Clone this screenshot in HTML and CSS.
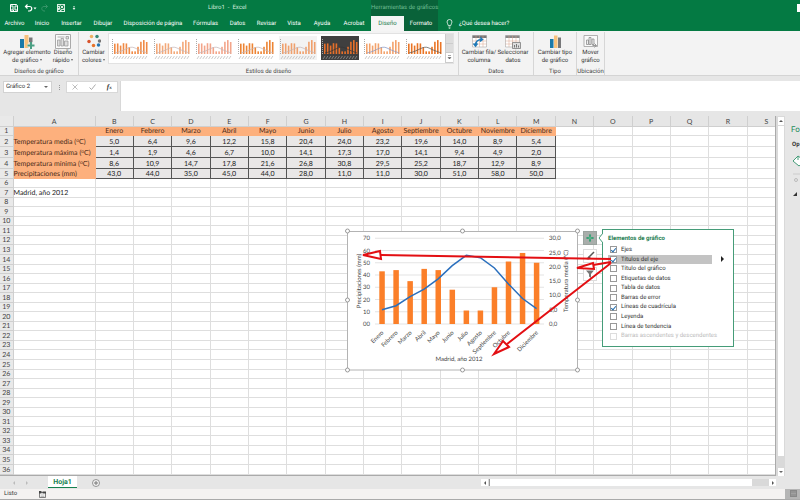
FILE: index.html
```html
<!DOCTYPE html>
<html lang="es">
<head>
<meta charset="utf-8">
<title>Libro1 - Excel</title>
<link rel="stylesheet" href="styles.css">
</head>
<body>
<header class="top">
  <div class="titlebar">
    <div class="quick">
      <button aria-label="Guardar"><svg width="8" height="8" viewBox="0 0 16 16"><path d="M1 1h12l2 2v12H1zM4 1v5h8V1M4 15v-5h8v5M7 12v3" fill="none" stroke="#fff" stroke-width="2"/></svg></button>
      <button aria-label="Deshacer"><svg width="13" height="8" viewBox="0 0 26 16"><path d="M3 5h8c6 0 6 8 0 9H8M7 1L3 5l4 4" fill="none" stroke="#fff" stroke-width="2.4"/><path d="M19 7h6l-3 4z" fill="#fff"/></svg></button>
      <button class="dim" aria-label="Rehacer"><svg width="8" height="8" viewBox="0 0 16 16"><path d="M13 5H6c-6 0-6 8 0 9h2M9 1l4 4-4 4" fill="none" stroke="#fff" stroke-width="2"/></svg></button>
      <button class="prev" aria-label="Vista previa"><svg width="8" height="8" viewBox="0 0 16 16"><path d="M0 0h16v16H0z" fill="#dcefe4"/><path d="M2 3h4M2 7h2M2 13h3" stroke="#087a43" stroke-width="1.500"/><circle cx="10" cy="6" r="3.500" fill="none" stroke="#087a43" stroke-width="2"/><path d="M8 9l-4 5M9 13h5" stroke="#087a43" stroke-width="2"/></svg></button>
      <button class="more" aria-label="Personalizar"><svg width="4" height="6" viewBox="0 0 8 12"><path d="M2 3h4M2 6h4l-2 3z" fill="#fff" stroke="#fff"/></svg></button>
    </div>
    <div class="doc">Libro1&nbsp; -&nbsp; Excel</div>
    <div class="tools">Herramientas de gráficos</div>
    <i class="winbtn"></i>
  </div>
  <nav class="tabs">
    <a href="#">Archivo</a><a href="#">Inicio</a><a href="#">Insertar</a><a href="#">Dibujar</a><a href="#">Disposición de página</a><a href="#">Fórmulas</a><a href="#">Datos</a><a href="#">Revisar</a><a href="#">Vista</a><a href="#">Ayuda</a><a href="#">Acrobat</a><a href="#" class="active">Diseño</a><a href="#" class="ctx">Formato</a>
    <a href="#" class="ask"><svg width="7" height="10" viewBox="0 0 14 20"><path d="M4.500 13C4.500 10 2 9 2 6a5 5 0 0 1 10 0c0 3-2.500 4-2.500 7zM5 16h4M5.500 18.500h3" fill="none" stroke="#fff" stroke-width="1.500"/></svg>¿Qué desea hacer?</a>
  </nav>
</header>

<section class="ribbon">
  <div class="group g-layout">
    <div class="tools-row">
      <button class="big wide"><svg width="16" height="15" viewBox="0 0 32 30"><path d="M2 10h8v18H2z" fill="#1b79a8"/><path d="M11 2h8v26h-8z" fill="#f8c27d"/><path d="M20 7h7v16h-7z" fill="#77787a"/><path d="M24 16v14M17 23h14" stroke="#f3f3f3" stroke-width="7"/><path d="M24 16v14M17 23h14" stroke="#4a9f83" stroke-width="4"/></svg><span>Agregar elemento<br>de gráfico <i class="car"></i></span></button>
      <button class="big"><svg width="16" height="15" viewBox="0 0 32 30"><path d="M1 1h30v28H1z" fill="#fafafa" stroke="#aaa" stroke-width="2"/><path d="M5 6h14M5 12h5v12H5zM12 9h5v15h-5zM19 14h7v10h-7zM22 5h5v5h-5z" fill="#ddd" stroke="#999" stroke-width="1.500"/></svg><span>Diseño<br>rápido <i class="car"></i></span></button>
    </div>
    <h2>Diseños de gráfico</h2>
  </div>
  <div class="group g-style">
    <div class="tools-row">
      <button class="big"><svg width="14" height="15" viewBox="0 0 28 30"><circle cx="9" cy="5" r="3.500" fill="#eeb064"/><circle cx="20" cy="5" r="3.500" fill="#39897a"/><circle cx="4" cy="15" r="3.500" fill="#d9532c"/><circle cx="25" cy="14" r="3.500" fill="#777"/><circle cx="13" cy="23" r="3.500" fill="#e8732a"/><circle cx="23" cy="22" r="3.500" fill="#2677b2"/></svg><span>Cambiar<br>colores <i class="car"></i></span></button>
      <div class="gallery" id="gallery">
        <div class="spin"><button aria-label="Arriba"></button><button aria-label="Abajo"></button><button aria-label="Más"><svg width="5" height="5" viewBox="0 0 10 10"><path d="M2 1h6M2 5h6L5 8z" fill="#555" stroke="#555"/></svg></button></div>
      </div>
    </div>
    <h2>Estilos de diseño</h2>
  </div>
  <div class="group g-data">
    <div class="tools-row">
      <button class="big"><svg width="15" height="15" viewBox="0 0 30 30"><path d="M1 3h28v23H1z" fill="#fff" stroke="#999"/><path d="M1 3h28v5H1z" fill="#777"/><path d="M8 3v23M15 3v23M22 3v23M1 14h28M1 20h28" stroke="#dba58c"/><path d="M7 23c0-8 5-12 13-12M16 7l5 4-5 4M3 19l4 5 4-5" fill="none" stroke="#1f7ab8" stroke-width="3"/></svg><span>Cambiar fila/<br>columna</span></button>
      <button class="big"><svg width="16" height="15" viewBox="0 0 32 30"><path d="M1 3h28v23H1z" fill="#fff" stroke="#999"/><path d="M1 3h28v5H1z" fill="#888"/><path d="M8 3v23M15 3v23M22 3v23M1 14h28M1 20h28" stroke="#dba58c"/><path d="M15 17h16v12H15z" fill="#ddd" stroke="#777" stroke-width="1.500"/><path d="M19 27v-5M23 27v-7M27 27v-4" stroke="#777" stroke-width="2"/></svg><span>Seleccionar<br>datos</span></button>
    </div>
    <h2>Datos</h2>
  </div>
  <div class="group g-type">
    <div class="tools-row">
      <button class="big"><svg width="14" height="15" viewBox="0 0 28 30"><path d="M4 10h7v18H4z" fill="#1b79a8"/><path d="M12 3h7v25h-7z" fill="#f8c27d"/><path d="M20 7h6v21h-6z" fill="#77787a"/></svg><span>Cambiar tipo<br>de gráfico</span></button>
    </div>
    <h2>Tipo</h2>
  </div>
  <div class="group g-place">
    <div class="tools-row">
      <button class="big"><svg width="15" height="15" viewBox="0 0 30 30"><path d="M2 3h27v22H2z" fill="#fafafa" stroke="#999" stroke-width="1.500"/><path d="M7 12h4v9H7zM12 7h4v14h-4zM18 10h4v11h-4z" fill="#eee" stroke="#888" stroke-width="1.500"/><path d="M19 23h8M23 19l4 4-4 4" fill="none" stroke="#999" stroke-width="2"/></svg><span>Mover<br>gráfico</span></button>
    </div>
    <h2>Ubicación</h2>
  </div>
</section>

<section class="formula">
  <div class="namebox"><input aria-label="Cuadro de nombres" value="Gráfico 2"><i class="car"></i></div>
  <div class="dots"><i></i><i></i><i></i></div>
  <div class="fx">
    <svg width="6" height="6" viewBox="0 0 12 12"><path d="M1 1l10 10M11 1L1 11" stroke="#aaa" stroke-width="1.500"/></svg>
    <svg width="7" height="6" viewBox="0 0 14 12"><path d="M1 7l4 4 8-10" fill="none" stroke="#aaa" stroke-width="2"/></svg>
    <button>f<sub>x</sub></button>
  </div>
  <textarea aria-label="Barra de fórmulas"></textarea>
</section>

<main class="work">
  <div class="sheet">
    <table id="grid"></table>
    <figure class="chart">
      <svg id="chart" width="239" height="147" viewBox="343 227 239 147"></svg>
    </figure>
    <div class="side">
      <button class="on" aria-label="Elementos de gráfico"><svg width="8" height="8" viewBox="0 0 16 16"><path d="M8 1v14M1 8h14" stroke="#2f9a6e" stroke-width="4"/><path d="M8 3v10M3 8h10" stroke="#8fd0b3" stroke-width="1"/></svg></button>
      <button aria-label="Estilos"><svg width="10" height="10" viewBox="0 0 20 20"><path d="M18 2l-9 9" stroke="#555" stroke-width="3"/><path d="M9 10c-4 0-3 5-7 6 4 2 9 1 9-3z" fill="#555"/></svg></button>
      <button aria-label="Filtros"><svg width="10" height="10" viewBox="0 0 20 20"><path d="M2 3h16l-6 7v8l-4-3v-5z" fill="#777"/></svg></button>
    </div>
    <form class="popup">
      <svg class="notch" width="5" height="10" viewBox="0 0 5 10"><path d="M5 0L1 5l4 5" fill="#fff" stroke="#459c78"/></svg>
      <h3>Elementos de gráfico</h3>
      <label><input type="checkbox" checked>Ejes</label>
      <label class="hot"><input type="checkbox" checked><span>Títulos del eje</span><svg width="3" height="6" viewBox="0 0 3 6"><path d="M0 0l3 3-3 3z" fill="#222"/></svg></label>
      <label><input type="checkbox">Título del gráfico</label>
      <label><input type="checkbox">Etiquetas de datos</label>
      <label><input type="checkbox">Tabla de datos</label>
      <label><input type="checkbox">Barras de error</label>
      <label><input type="checkbox" checked>Líneas de cuadrícula</label>
      <label><input type="checkbox">Leyenda</label>
      <label><input type="checkbox">Línea de tendencia</label>
      <label class="off"><input type="checkbox" disabled>Barras ascendentes y descendentes</label>
    </form>
    <svg class="arrows" width="280" height="120" viewBox="350 240 280 120">
      <g fill="none" stroke="#e30f13" stroke-width="2">
        <path d="M611 259L381 255M611 262L593 265M611 263L507 344"/>
        <path d="M363 255l17-4 1 8zM577 268l16-5 1 6zM494 354l9-13 6 6z" fill="#fff"/>
      </g>
    </svg>
  </div>
  <div class="vscroll"><button aria-label="Subir"><i class="up"></i></button><div class="thumb"></div><div class="rest"></div><button aria-label="Bajar"><i class="car"></i></button></div>
  <aside class="pane">
    <h2>Fo</h2>
    <p>Op</p>
    <svg width="14" height="12" viewBox="0 0 14 12"><path d="M6 1l7 5-6 5-6-5zM6 1v4" fill="#fff" stroke="#459c78"/></svg>
    <svg width="14" height="12" viewBox="0 0 14 12"><path d="M1 3h12" stroke="#ccc"/><circle cx="4" cy="9" r="1.500" fill="none" stroke="#bbb"/></svg>
    <svg width="6" height="12" viewBox="0 0 6 12"><path d="M5 5v4H1z" fill="#333"/></svg>
  </aside>
</main>

<div class="bottom">
  <div class="nav"><i></i><i></i></div>
  <a href="#" class="sheettab">Hoja1</a>
  <button class="add" aria-label="Hoja nueva"><svg width="8" height="8" viewBox="0 0 16 16"><circle cx="8" cy="8" r="7" fill="#f4f4f4" stroke="#777" stroke-width="1.500"/><path d="M8 4v8M4 8h8" stroke="#777" stroke-width="2"/></svg></button>
  <div class="hscroll"><button aria-label="Izquierda"><i class="left"></i></button><div class="thumb"></div><div class="rest"></div><button aria-label="Derecha"><i class="right"></i></button></div>
</div>
<footer class="status">
  <span>Listo</span>
  <svg width="7" height="7" viewBox="0 0 14 14"><path d="M1 3h12v10H1z" fill="#fff" stroke="#555" stroke-width="1.500"/><path d="M0 0h5v5H0zM7 1h7v4H7z" fill="#444"/><path d="M3 8h8M3 11h8" stroke="#777"/></svg>
  <div class="view"><svg width="7" height="7" viewBox="0 0 14 14"><path d="M0 0h14v14H0z" fill="#888"/><path d="M2 4h10M2 7h10M2 10h10" stroke="#bbb"/></svg></div>
</footer>
<script src="app.js"></script>
</body>
</html>
```

FILE: styles.css
```css
* { box-sizing: border-box; }
body {
  margin: 0; height: 100vh; overflow: hidden; display: flex; flex-direction: column;
  font: 6px/8px Roboto, "Open Sans", sans-serif; color: #333; background: #e6e6e6;
  text-rendering: geometricPrecision;
}
button, input, textarea { font: inherit; color: inherit; border: 0; padding: 0; margin: 0; background: none; border-radius: 0; text-rendering: inherit; }
button { display: flex; align-items: center; justify-content: center; }
a { color: inherit; text-decoration: none; }
h2, h3, p, figure { margin: 0; font-size: inherit; font-weight: normal; }
svg { display: block; flex: none; }

.top { background: #047a43; color: #fff; flex: none; }
.titlebar { display: grid; grid-template-columns: 82px 289px 67px 1fr 3px; height: 16px; align-items: center; }
.quick { display: flex; gap: 6px; padding-left: 10px; align-items: center; }
.quick .dim { opacity: .2; margin-left: -2px; }
.quick .prev { margin-left: 2px; }
.quick .more { margin-left: 1px; }
.doc { padding-left: 126px; color: #d3ebdf; white-space: nowrap; }
.tools { background: #096239; color: #6fbd94; height: 16px; line-height: 16px; text-align: center; white-space: nowrap; }
.winbtn { grid-column: 5; height: 8px; background: #fff; }
.tabs {
  display: grid; height: 15px; line-height: 15px; text-align: center; white-space: nowrap;
  grid-template-columns: 29px 26px 33px 30px 70px 35px 29px 29px 26px 30px 34px 33px 34px 1fr;
}
.tabs .active { background: #f5f5f5; color: #17794a; }
.tabs .ctx { background: #096239; }
.tabs .ask { display: flex; align-items: center; gap: 6px; padding-left: 8px; }

.ribbon { display: flex; height: 45px; flex: none; background: #f3f3f3; border-bottom: 1px solid #d4d4d4; }
.group { display: flex; flex-direction: column; justify-content: space-between; border-right: 1px solid #d6d6d6; margin-top: 1px; }
.group h2 { text-align: center; line-height: 7px; color: #444; }
.g-layout { width: 79px; }
.g-style { width: 380px; }
.g-data { width: 75px; }
.g-type { width: 43px; }
.g-place { width: 28px; }
.tools-row { display: flex; justify-content: center; }
.g-style .tools-row { justify-content: flex-start; }
.big { flex-direction: column; width: 24px; justify-content: flex-start; padding-top: 2px; white-space: nowrap; }
.big.wide { width: 48px; }
.g-style .big { width: 29px; }
.g-data .big { width: 34px; }
.g-type .big { width: 36px; }
.car { display: inline-block; border: 2px solid transparent; border-top-color: #666; border-bottom: 0; vertical-align: middle; }
.big .car { border-width: 1px; border-top-width: 2px; border-bottom: 0; }
.up { border: 2px solid transparent; border-bottom-color: #555; border-top: 0; }
.left { border: 2px solid transparent; border-right-color: #555; border-left: 0; }
.right { border: 2px solid transparent; border-left-color: #555; border-right: 0; }
.gallery { display: flex; width: 346px; height: 31px; margin-top: 1px; background: #fff; border: 1px solid #e2e2e2; }
.gallery > svg { margin-top: 2px; }
.spin { order: 9; margin-left: auto; width: 8px; display: grid; grid-template-rows: 1fr 1fr 1fr; border-left: 1px solid #ccc; }
.spin button { background: #ddd; border-bottom: 1px solid #ccc; }
.spin button:last-child { background: #fff; }

.formula { display: flex; flex: none; height: 35px; margin-top: 5px; align-items: flex-start; }
.namebox { display: flex; align-items: center; width: 49px; height: 12px; margin-left: 3px; background: #fff; border: 1px solid #d2d2d2; }
.namebox input { flex: 1; min-width: 0; padding-left: 2px; }
.namebox .car { margin-right: 3px; }
.dots { width: 14px; height: 12px; display: flex; flex-direction: column; gap: 1px; align-items: center; justify-content: center; }
.dots i { width: 1px; height: 1px; background: #999; }
.fx { width: 52px; height: 12px; display: flex; align-items: center; justify-content: space-around; background: #fff; border: 1px solid #d8d8d8; }
.fx button { display: block; font: italic bold 7px/8px "Liberation Serif", serif; }
.fx sub { font-size: 5px; line-height: 1px; vertical-align: baseline; }
.formula textarea { flex: 1; height: 30px; margin-left: 2px; background: #fff; resize: none; border-left: 1px solid #d8d8d8; }

.work { flex: 1; display: flex; min-height: 0; }
.sheet { flex: 1; position: relative; overflow: hidden; background: #fff; border-right: 1px solid #aaa; border-bottom: 1px solid #aaa; }
table { border-collapse: collapse; table-layout: fixed; width: calc(100% + 11px); height: 100%; color: #222; font: 7px/8px Lato, "Open Sans", sans-serif; }
th, td { padding: 0; border: 1px solid #dedede; text-align: center; vertical-align: bottom; font-weight: normal; white-space: nowrap; }
tr > :first-child { width: 13px; background: #e9e9e9; color: #444; border-color: #cfcfcf; border-left: 0; }
tr > :nth-child(2) { width: 82px; }
thead th { background: #e6e6e6; color: #444; border-top: 0; border-color: #cfcfcf; height: 10px; }
td.label { text-align: left; overflow: visible; }
td.peach, td.label.peach { background: #fdb07d; border-color: #fdb07d; color: #4a2a18; }
td.num { background: #e9e7e7; border-color: #555; }
.tall { height: 11px; }
td sup { font-size: 5px; line-height: 1px; vertical-align: 2px; }

.chart { position: absolute; left: 343px; top: 111px; font-family: Lato, "Open Sans", sans-serif; }
.side { position: absolute; left: 583px; top: 115px; display: grid; gap: 4px; }
.side button { width: 14px; height: 14px; background: #fff; border: 1px solid #ddd; }
.side .on { background: #a9aeab; border-color: #9aa39e; }
.popup {
  position: absolute; left: 602px; top: 113px; width: 132px; height: 118px; padding: 3px 5px 5px;
  display: grid; grid-template-rows: 12px repeat(10, 1fr); background: #fff; border: 1px solid #459c78; color: #333;
}
.popup h3 { color: #1c7c50; font-weight: bold; line-height: 12px; }
.popup label { display: flex; align-items: center; white-space: nowrap; }
.popup .hot span { flex: 1; background: #c3c3c3; margin-right: 9px; line-height: 9px; }
.popup .hot svg { margin-right: 4px; }
.popup .hot { background: linear-gradient(to right, #c3c3c3 20px, transparent 20px); }
.popup .off { color: #bbb; }
.popup input { appearance: none; width: 7px; height: 7px; margin: 0 4px 0 2px; border: 1px solid #999; background: #fff; display: grid; place-items: center; flex: none; }
.popup .off input { border-color: #ddd; }
.popup input:checked::before { content: ""; width: 2px; height: 4px; border: solid #246eae; border-width: 0 1px 1px 0; transform: rotate(40deg); }
.notch { position: absolute; left: -5px; top: 3px; }
.arrows { position: absolute; left: 350px; top: 124px; pointer-events: none; }

.vscroll { width: 9px; display: flex; flex-direction: column; padding: 1px 1px 0 2px; background: #d9d9d9; }
.vscroll button { height: 8px; background: #fff; }
.vscroll .thumb { flex: 1; background: #fff; margin: 1px 0; }
.vscroll .rest { height: 11px; }
.pane { width: 15px; padding: 9px 0 0 7px; overflow: hidden; background: #e6e6e6; }
.pane h2 { font-size: 8px; line-height: 10px; color: #1c8a5a; margin-left: -1px; }
.pane p { line-height: 20px; font-weight: bold; color: #333; }
.pane svg { margin-bottom: 4px; }

.bottom { display: flex; flex: none; height: 13px; align-items: flex-start; padding-right: 24px; }
.nav { display: flex; gap: 11px; width: 48px; padding: 5px 0 0 13px; }
.nav i { height: 4px; border: 2px solid transparent; border-right-color: #bbb; border-left: 0; }
.nav i + i { border: 2px solid transparent; border-left-color: #bbb; border-right: 0; }
.sheettab { width: 29px; height: 12px; line-height: 13px; font-size: 7px; text-align: center; font-weight: bold; color: #16814f; background: #fff; border-bottom: 1px solid #16814f; }
.add { margin: 3px 0 0 15px; }
.hscroll { margin: 3px 0 0 auto; width: 38%; display: flex; height: 7px; background: #d9d9d9; }
.hscroll button { width: 7px; background: #fff; }
.hscroll .thumb { flex: 1; margin-left: 1px; background: #fff; border-left: 1px solid #999; }
.hscroll .rest { width: 17px; }
.status { display: flex; flex: none; align-items: center; height: 11px; gap: 22px; padding-left: 4px; background: #f4f2f1; border-bottom: 1px solid #aaa; }
.view { margin-left: auto; width: 15px; height: 10px; padding: 1px 0 0 5px; background: #b5b5b5; }
```

FILE: app.js
```js
const months = ["Enero", "Febrero", "Marzo", "Abril", "Mayo", "Junio", "Julio", "Agosto", "Septiembre", "Octubre", "Noviembre", "Diciembre"];
const media = [5.0, 6.4, 9.6, 12.2, 15.8, 20.4, 24.0, 23.2, 19.6, 14.0, 8.9, 5.4];
const maxima = [1.4, 1.9, 4.6, 6.7, 10.0, 14.1, 17.3, 17.0, 14.1, 9.4, 4.9, 2.0];
const minima = [8.6, 10.9, 14.7, 17.8, 21.6, 26.8, 30.8, 29.5, 25.2, 18.7, 12.9, 8.9];
const rain = [43, 44, 35, 45, 44, 28, 11, 11, 30, 51, 58, 50];
const fmt = v => v.toFixed(1).replace(".", ",");
const deg = "(<sup>o</sup>C)";
const rows = [
  ["", months],
  ["Temperatura media " + deg, media.map(fmt)],
  ["Temperatura máxima " + deg, maxima.map(fmt)],
  ["Temperatura mínima " + deg, minima.map(fmt)],
  ["Precipitaciones (mm)", rain.map(fmt)]
];

// Worksheet
const letters = "ABCDEFGHIJKLMNOPQRS".split("");
let html = "<thead><tr><th></th>" + letters.map(l => `<th>${l}</th>`).join("") + "</tr></thead><tbody>";
for (let r = 1; r <= 36; r++) {
  const data = rows[r - 1];
  html += `<tr${r > 1 && r < 5 ? ' class="tall"' : ""}><th>${r}</th>`;
  letters.forEach((l, c) => {
    if (c === 0) html += `<td class="label${data ? " peach" : ""}">${data ? data[0] : r === 7 ? "Madrid, año 2012" : ""}</td>`;
    else if (data && c <= 12) html += `<td class="${r === 1 ? "peach" : "num"}">${data[1][c - 1]}</td>`;
    else html += "<td></td>";
  });
  html += "</tr>";
}
document.getElementById("grid").innerHTML = html + "</tbody>";

// Combined chart
const X = i => 382 + i * 14.05, Y = v => 324 - v * 1.225;
let s = '<rect x="347.5" y="231.500" width="230" height="138.500" fill="#fff" stroke="#b3b3b3"/>';
for (let v = 0; v <= 70; v += 10) {
  s += `<path d="M375 ${Y(v)}H544" stroke="#e3e3e3" stroke-width="1"/>`;
  s += `<text x="370" y="${Y(v) + 2}" text-anchor="end">${v || "00"}</text>`;
}
for (let v = 0; v <= 30; v += 5) s += `<text x="549" y="${324 - v * 2.86 + 2}">${fmt(v)}</text>`;
rain.forEach((v, i) => {
  s += `<rect x="${X(i) - 2.7}" y="${Y(v)}" width="5.500" height="${324 - Y(v)}" fill="#fb7f29"/>`;
  s += `<text text-anchor="end" transform="translate(${X(i) + 2} 333) rotate(-45)">${i === 10 ? "" : months[i]}</text>`;
});
s += `<polyline points="${media.map((v, i) => X(i) + "," + (324 - v * 2.86)).join(" ")}" fill="none" stroke="#2a6fbd" stroke-width="1.500"/>`;
s += '<text text-anchor="middle" x="459" y="361">Madrid, año 2012</text>';
s += '<text text-anchor="middle" transform="translate(361 281) rotate(-90)">Precipitaciones (mm)</text>';
s += '<text text-anchor="middle" transform="translate(568 281) rotate(-90)">Temperatura media (°C)</text>';
[[347, 231], [462, 231], [577, 231], [347, 300], [577, 300], [347, 370], [462, 370], [577, 370]].forEach(p => {
  s += `<circle cx="${p[0] + .5}" cy="${p[1]}" r="2" fill="#fff" stroke="#999"/>`;
});
const chart = document.getElementById("chart");
chart.setAttribute("font-size", "6");
chart.setAttribute("fill", "#444");
chart.innerHTML = s;

// Style gallery
const themes = [
  ["#fff", "#f08a45", "none"], ["#fff", "#f3a878", "none"], ["#fff", "#f3a58a", "none"], ["#fff", "#ed8433", "none"],
  ["#f3f3f3", "#f0a06c", "none"], ["#3f3f3f", "#e8702a", "#333"], ["#fff", "#f3a26b", "#8193c4"], ["#fff", "#ea7424", "#555"]
];
document.getElementById("gallery").insertAdjacentHTML("afterbegin", themes.map(([bg, bar, line]) => {
  let g = `<svg width="42" height="25" viewBox="0 0 42 25"><rect x="2" width="38" height="24" fill="${bg}"/>`;
  rain.forEach((v, i) => {
    g += `<rect x="${5 + i * 2.9}" y="${18 - v * .24}" width="1.600" height="${v * .24}" fill="${bar}"/>`;
    g += `<path d="M${6 + i * 2.9} 20l-2 3" stroke="#aaa" stroke-width=".6"/>`;
  });
  g += '<path d="M3.500 3v15" stroke="#aaa" stroke-width="1" stroke-dasharray="1 1"/>';
  g += `<path d="M6 17C16 15 20 9 26 12s7 3 12 5" fill="none" stroke="${line === "none" ? "#c3b5b8" : line}" stroke-width=".7"/>`;
  return g + "</svg>";
}).join(""));
```
